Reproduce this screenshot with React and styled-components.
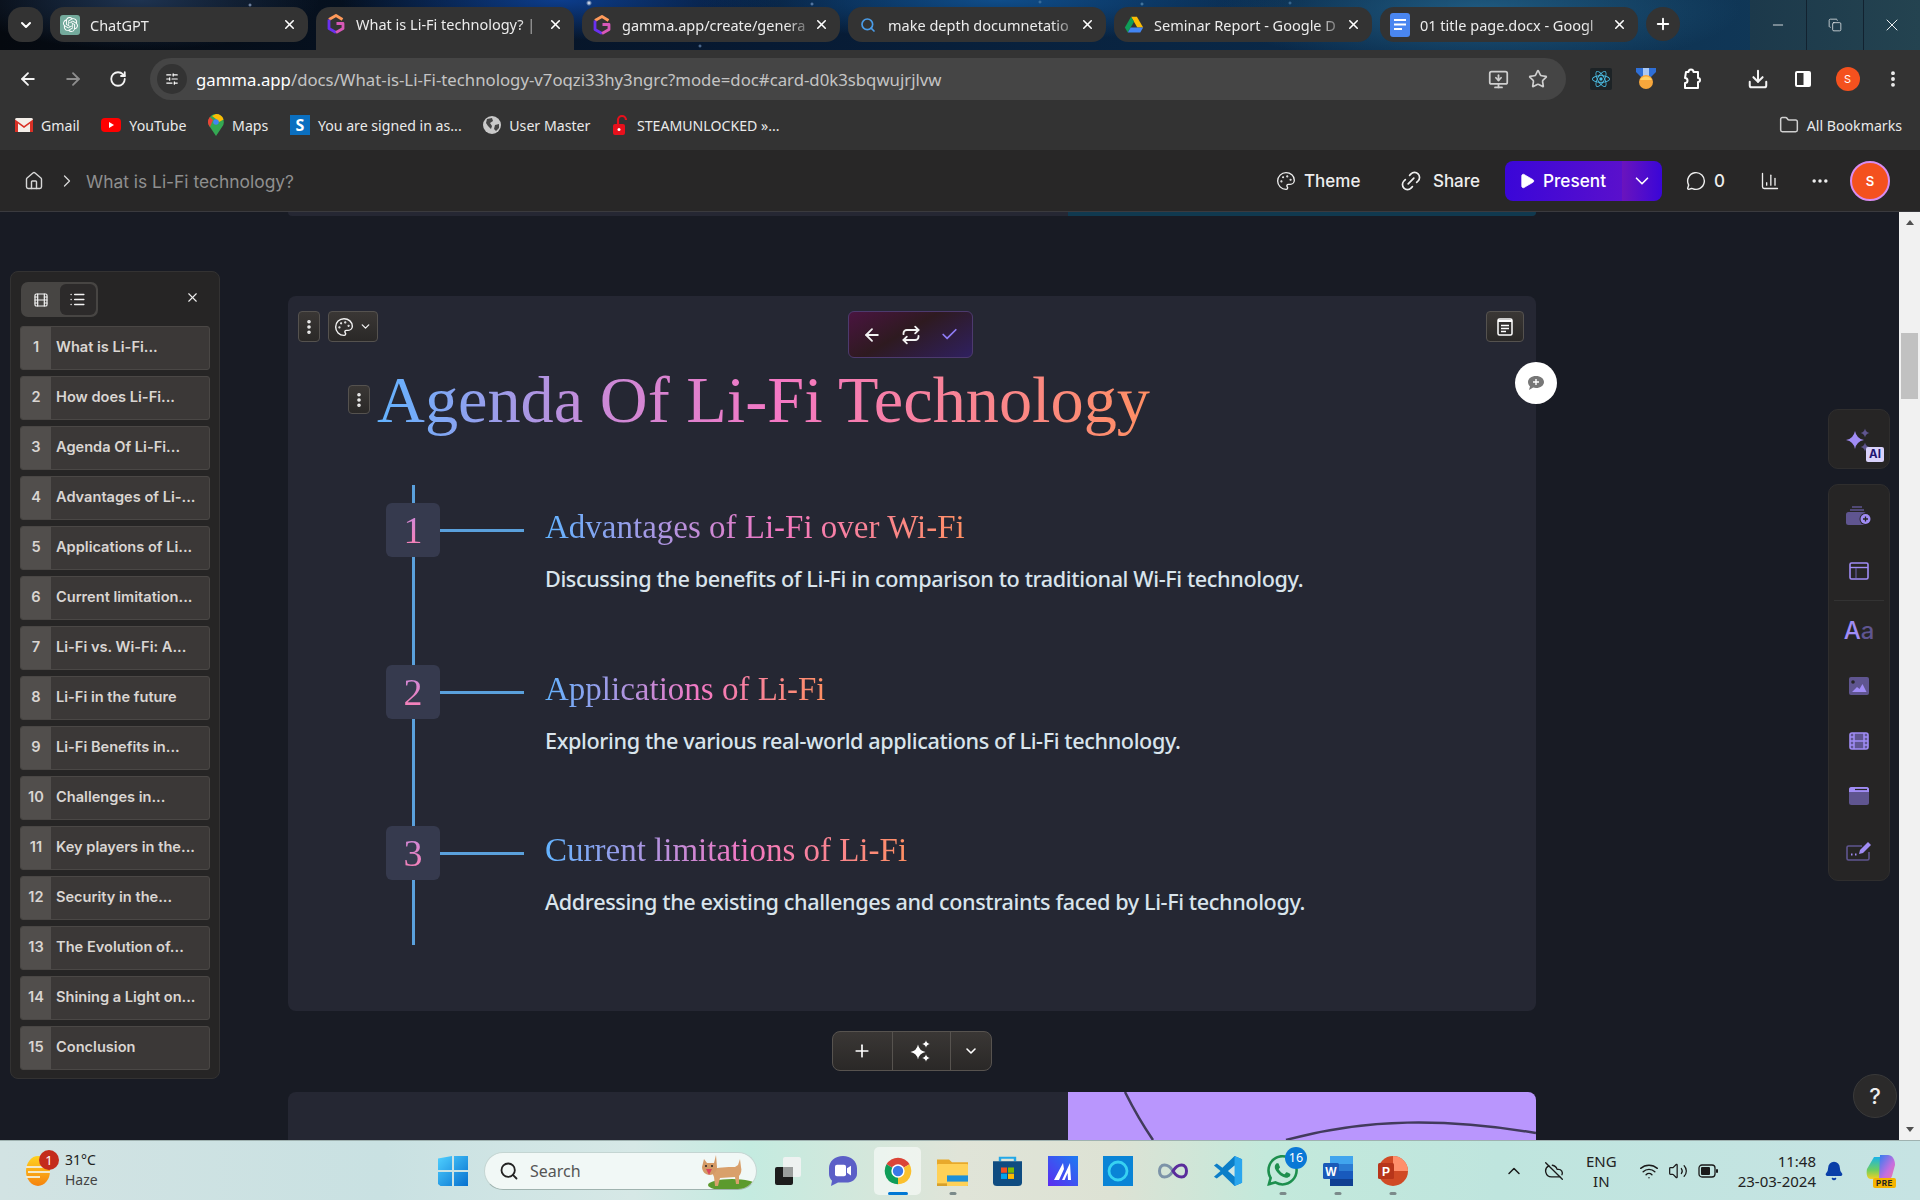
import React from 'react';
import styled, { createGlobalStyle } from 'styled-components';
import {
  ChevronDown, X, Plus, Minus, Copy, ArrowLeft, ArrowRight, RotateCw, Star, MonitorDown, Download,
  EllipsisVertical, Ellipsis, Home, ChevronRight, Palette, Link2, Play, MessageCircle, ChartColumn,
  Film, List, Repeat, Check, Search, ChevronUp, Wifi, Volume2, Bell, CloudOff, Folder, SlidersHorizontal
} from 'lucide-react';
import { SiOpenai, SiReact, SiWhatsapp } from 'react-icons/si';

const Global = createGlobalStyle`
  html, body { margin: 0; padding: 0; height: 100%; overflow: hidden; background: #181b24; }
  * { box-sizing: border-box; }
  #root { height: 1200px; width: 1920px; }
`;

const Page = styled.div`
  width: 1920px; height: 1200px; display: flex; flex-direction: column;
  font-family: "Noto Sans", sans-serif; overflow: hidden;
`;

/* ---- tab strip ---- */
const TabStrip = styled.div`
  height: 50px; flex: none; display: flex; align-items: flex-start; padding-left: 8px;
  background:
    radial-gradient(circle at 250px 5px, #9fb4d8 0, transparent 2px),
    radial-gradient(circle at 589px 3px, #ffffff 0, transparent 3px),
    radial-gradient(circle at 1040px 2px, #4d7fa8 0, transparent 2px),
    radial-gradient(circle at 1142px 4px, #5f93b8 0, transparent 2px),
    radial-gradient(circle at 1290px 3px, #4d7fa8 0, transparent 2px),
    radial-gradient(circle at 812px 4px, #7a9cc8 0, transparent 2px),
    radial-gradient(circle at 700px 46px, #6f8fb8 0, transparent 2px),
    radial-gradient(ellipse 260px 60px at 1480px 10px, #1f5a80 0, transparent 100%),
    radial-gradient(ellipse 300px 40px at 1000px 0, #0f4d8a 0, transparent 100%),
    radial-gradient(ellipse 220px 40px at 560px 0, #0c3d8c 0, transparent 100%),
    radial-gradient(ellipse 180px 50px at 140px 0, #1e3350 0, transparent 100%),
    linear-gradient(90deg, #05090f, #071a33 40%, #0a2a4a 70%, #123c5c);
`;
const TabMenu = styled.div`
  width: 35px; height: 35px; margin-top: 7px; margin-right: 7px; border-radius: 14px; background: #333;
  display: flex; align-items: center; justify-content: center; color: #fff; flex: none;
`;
const Tab = styled.div`
  width: 258px; margin-right: 8px; flex: none; height: ${p => (p.$active ? 43 : 35)}px; margin-top: 7px;
  background: #333333; border-radius: ${p => (p.$active ? '14px 14px 0 0' : '14px')};
  display: flex; align-items: ${p => (p.$active ? 'flex-start' : 'center')};
  padding: ${p => (p.$active ? '7px' : '0')} 10px 0 10px; color: #f0f0f0;
`;
const TabIcon = styled.span`
  width: 20px; height: 20px; flex: none; display: flex; align-items: center; justify-content: center; margin-right: 10px;
`;
const TabTitle = styled.span`
  flex: 1; min-width: 0; white-space: nowrap; font-size: 14.5px; line-height: 20px; color: #ececec;
  -webkit-mask-image: linear-gradient(90deg, #000 88%, rgba(0,0,0,.25) 100%);
  mask-image: linear-gradient(90deg, #000 88%, rgba(0,0,0,.25) 100%);
`;
const TabClose = styled.span`
  width: 18px; height: 20px; flex: none; display: flex; align-items: center; justify-content: center; color: #fff; margin-left: 4px;
`;
const NewTab = styled.div`
  width: 34px; height: 34px; margin-top: 7px; border-radius: 50%; background: #333; color: #fff; flex: none;
  display: flex; align-items: center; justify-content: center;
`;
const WindowControls = styled.div`
  margin-left: auto; width: 170px; height: 50px; display: flex; flex: none; background: linear-gradient(90deg, #1c394b, #244350);
`;
const WindowBtn = styled.div`
  flex: 1; display: flex; align-items: center; justify-content: center; color: #fff; height: 50px;
  border-right: ${p => (p.$last ? '0' : '1px solid #122230')};
`;

/* ---- toolbar ---- */
const Toolbar = styled.div`
  height: 50px; flex: none; background: #333333; display: flex; padding: 8px 5px 0 5px; align-items: flex-start;
`;
const NavBtn = styled.div`
  width: 45px; height: 42px; flex: none; display: flex; align-items: center; justify-content: center;
  color: ${p => (p.$dim ? '#8d8d8d' : '#f4f4f4')}; margin-left: ${p => p.$ml || 0}px;
`;
const AddressBar = styled.div`
  width: 1416px; height: 42px; margin-left: 10px; flex: none; border-radius: 21px; background: #454545;
  display: flex; align-items: center; padding: 0 8px 0 7px;
`;
const SiteInfo = styled.div`
  width: 30px; height: 30px; border-radius: 50%; background: #333; color: #fff; flex: none;
  display: flex; align-items: center; justify-content: center; margin-right: 9px;
`;
const Url = styled.div`
  flex: 1; font-size: 16.75px; color: #c4c4c4; white-space: nowrap; letter-spacing: 0;
  b { font-weight: 400; color: #fff; }
`;
const BarIcon = styled.span`
  width: 40px; display: flex; justify-content: center; color: #cfcfcf; flex: none;
`;
const ProfileDot = styled.span`
  width: 24px; height: 24px; border-radius: 50%; background: #f4511e; color: #fff; font-size: 11px;
  display: flex; align-items: center; justify-content: center; font-family: Inter, sans-serif;
`;
const ReactTile = styled.span`
  width: 22px; height: 22px; background: #1d2326; border-radius: 2px; color: #4cc0e8; display: flex; align-items: center; justify-content: center;
`;

/* ---- bookmarks ---- */
const Bookmarks = styled.div`
  height: 50px; flex: none; background: #333333; display: flex; align-items: center; padding: 0 18px 0 15px; gap: 21.6px;
`;
const Bookmark = styled.div`
  display: flex; align-items: center; gap: 8px; font-size: 14.15px; color: #eaeaea; white-space: nowrap;
  margin-left: ${p => (p.$end ? 'auto' : 0)};
`;

/* ---- gamma header ---- */
const AppHeader = styled.div`
  height: 62px; flex: none; background: #282727; border-bottom: 1px solid #3a3a3e; display: flex; align-items: center;
  padding: 0 30px 0 24px; font-family: Inter, sans-serif; color: #f0f0f0;
`;
const Crumb = styled.div`
  display: flex; align-items: center; color: #8f8f8f; font-size: 17.4px; flex: 1; padding-top: 1px;
  svg { color: #d8d8d8; flex: none; }
`;
const CrumbSep = styled.span`
  display: flex; margin: 0 9px 0 13px; 
`;
const HeaderAction = styled.div`
  display: flex; align-items: center; gap: ${p => p.$gap || 8}px; font-size: 17px; font-weight: 500; margin-left: ${p => p.$ml || 0}px; color: #eee; padding-top: 1px;
`;
const PresentBtn = styled.div`
  display: flex; height: 40px; width: 157px; border-radius: 8px; overflow: hidden; color: #fff; margin-left: 25px; font-size: 17.2px; font-weight: 500;
`;
const PresentMain = styled.div`
  flex: 1; display: flex; align-items: center; gap: 7px; padding-left: 13px;
  background: linear-gradient(90deg, #3a06d8, #5a10cc);
`;
const PresentMore = styled.div`
  width: 40px; display: flex; align-items: center; justify-content: center;
  background: linear-gradient(90deg, #6a14bd, #3a06d8);
`;
const UserAvatar = styled.div`
  width: 40px; height: 40px; border-radius: 50%; background: #f4511e; border: 2px solid #d88cf0; color: #fff; margin-left: 20px;
  display: flex; align-items: center; justify-content: center; font-size: 13px; font-weight: 600;
`;

/* ---- main area ---- */
const Main = styled.div`
  position: relative; height: 928px; flex: none; display: flex; background: #181b24; overflow: hidden;
`;
const Doc = styled.div`
  flex: 1; display: flex; flex-direction: column; padding-left: 288px; overflow: hidden;
`;
const PrevCard = styled.div`
  width: 1248px; height: 4px; flex: none; background: #252733; border-radius: 0 0 8px 8px; display: flex; justify-content: flex-end; margin-bottom: 80px;
  span { width: 468px; background: #10394f; border-radius: 0 0 8px 0; }
`;
const Card = styled.div`
  position: relative; width: 1248px; height: 715px; flex: none; background: #252733; border-radius: 8px; padding: 64px 0 0 89px;
`;
const CtlBtn = styled.div`
  position: absolute; left: ${p => p.$x}px; top: ${p => p.$y}px; width: ${p => p.$w}px; height: ${p => p.$h || 31}px;
  background: linear-gradient(#3a3735, #2a2827); border: 1px solid #55524f; border-radius: 4px; color: #f2f2f2;
  display: flex; align-items: center; justify-content: center; gap: ${p => p.$gap || 0}px;
`;
const Floating = styled.div`
  position: absolute; left: 560px; top: 15px; width: 125px; height: 47px; border-radius: 6px; border: 1px solid #4d3a6e; color: #f2f2f2;
  background: linear-gradient(150deg, #4a1440 0%, #2e1a20 45%, #2f2060 100%);
  display: flex; align-items: center; justify-content: space-between; padding: 0 13px;
`;
const CommentFab = styled.div`
  position: absolute; right: -21px; top: 66px; width: 42px; height: 42px; border-radius: 50%; background: #fff; color: #777;
  display: flex; align-items: center; justify-content: center;
`;
const Title = styled.h1`
  margin: 0; font-family: "Liberation Serif", serif; font-weight: 400; font-size: 66.3px; line-height: 80px; display: inline-block;
  background: linear-gradient(90deg, #62b3ff 0%, #c98ad8 28%, #f478c4 52%, #ff8f63 100%);
  -webkit-background-clip: text; background-clip: text; color: transparent; white-space: nowrap;
`;
const Timeline = styled.div`
  position: relative; margin: 45px 0 0 9px; height: 460px; padding-top: 18px;
  &::before { content: ''; position: absolute; left: 26px; top: 0; bottom: 0; width: 3px; background: #5aa0dc; }
`;
const Item = styled.div`
  position: relative; height: 161.5px; display: flex; align-items: flex-start;
`;
const NumBox = styled.div`
  width: 54px; height: 54px; border-radius: 6px; background: #363a4e; flex: none; display: flex; align-items: center; justify-content: center;
  font-family: "Liberation Serif", serif; font-size: 38px; position: relative;
  span {
    background: linear-gradient(180deg, #c78ae0, #ff7fb0); -webkit-background-clip: text; background-clip: text; color: transparent;
  }
`;
const Connector = styled.div`
  width: 84px; height: 3px; margin-top: 26px; background: #5aa0dc; flex: none;
`;
const ItemText = styled.div`
  margin-left: 21px; margin-top: 0;
`;
const ItemHead = styled.div`
  font-family: "Liberation Serif", serif; font-size: 33px; line-height: 48px; display: inline-block; white-space: nowrap;
  background: linear-gradient(90deg, #62b3ff 0%, #f478c4 55%, #ff8f63 100%);
  -webkit-background-clip: text; background-clip: text; color: transparent;
`;
const ItemDesc = styled.div`
  font-size: 21.65px; line-height: 34px; color: #d9e4ec; margin-top: 11px; white-space: nowrap; font-weight: 500; letter-spacing: -0.4px;
`;
const AddBar = styled.div`
  align-self: flex-start; margin: 20px 0 21px 544px; width: 160px; height: 40px; flex: none; display: flex; border-radius: 8px;
  border: 1px solid #57534f; background: linear-gradient(#3a3735, #2a2827); color: #fff; overflow: hidden;
`;
const AddCell = styled.div`
  width: ${p => p.$w}px; display: flex; align-items: center; justify-content: center;
  border-right: ${p => (p.$last ? '0' : '1px solid #57534f')};
`;
const NextCard = styled.div`
  width: 1248px; flex: 1; background: #252733; border-radius: 8px 8px 0 0; display: flex; justify-content: flex-end;
`;
const NextImage = styled.div`
  width: 468px; height: 100%; background: #b996fd; border-radius: 0 8px 0 0; overflow: hidden;
  svg { display: block; }
`;
const Scrollbar = styled.div`
  width: 21px; flex: none; background: #f1f1f1; display: flex; flex-direction: column; align-items: center; padding-top: 8px;
`;
const ScrollArrow = styled.div`
  width: 0; height: 0; border-left: 4px solid transparent; border-right: 4px solid transparent;
  ${p => (p.$down ? 'border-top: 5px solid #505050; margin-top: auto; margin-bottom: 8px;' : 'border-bottom: 5px solid #505050;')}
`;
const ScrollThumb = styled.div`
  width: 17px; height: 66px; background: #c1c1c1; margin-top: 108px;
`;
const Outline = styled.div`
  position: absolute; left: 10px; top: 59px; width: 210px; height: 808px; background: #262525; border: 1px solid #333232; border-radius: 8px;
  padding: 10px 9px; font-family: Inter, sans-serif;
`;
const OutlineTop = styled.div`
  display: flex; align-items: center; justify-content: space-between; height: 35px; margin-bottom: 9px; padding: 0 10px 0 1px; color: #eee;
`;
const OutlineClose = styled.span`
  display: flex; margin-bottom: 5px;
`;
const Toggle = styled.div`
  display: flex; width: 77px; height: 35px; background: #474543; border-radius: 7px; padding: 2px;
`;
const ToggleBtn = styled.div`
  flex: 1; display: flex; align-items: center; justify-content: center; border-radius: 6px;
  background: ${p => (p.$on ? '#2c2a2a' : 'transparent')}; color: #f2f2f2;
`;
const OutlineList = styled.div`
  display: flex; flex-direction: column; gap: 6px;
`;
const OutlineItem = styled.div`
  height: 44px; display: flex; background: #3b3837; border: 1px solid #4a4745; border-radius: 3px; overflow: hidden; color: #d9d5d2;
  font-size: 14.6px; font-weight: 600;
`;
const OutlineNum = styled.div`
  width: 30px; flex: none; background: #514e4c; display: flex; align-items: center; justify-content: center; padding-bottom: 2px;
`;
const OutlineName = styled.div`
  padding: 0 0 2px 5px; display: flex; align-items: center; white-space: nowrap;
`;
const RailPanel = styled.div`
  position: absolute; right: 30px; top: ${p => p.$top}px; width: 62px; height: ${p => p.$h}px; background: #262525; border: 1px solid #2f2e2e; border-radius: 10px;
  display: flex; flex-direction: column; align-items: center; padding-top: ${p => p.$pad || 0}px;
`;
const RailSlot = styled.div`
  height: 55px; width: 100%; display: flex; align-items: center; justify-content: center; position: relative; flex: none;
`;
const RailRule = styled.div`
  width: 50px; height: 1px; background: #333; margin: 2px 0; flex: none;
`;
const AiBadge = styled.span`
  position: absolute; right: 5px; bottom: 5px; width: 18px; height: 15px; line-height: 15px; text-align: center; background: #d9d2fb; color: #1f1470; font-size: 11.5px; font-weight: 700; border-radius: 2px;
  font-family: Inter, sans-serif;
`;
const FontGlyph = styled.div`
  font-family: Inter, sans-serif; font-size: 24px; color: #a08cf5; font-weight: 500;
  span { color: #5f5590; }
`;
const HelpBtn = styled.div`
  position: absolute; left: 1853px; top: 862px; width: 44px; height: 44px; border-radius: 50%; background: #2b2a2a; border: 1px solid #3a3a3a; color: #eee;
  display: flex; align-items: center; justify-content: center; font: 500 22px Inter, sans-serif;
`;

/* ---- taskbar ---- */
const Taskbar = styled.div`
  height: 60px; flex: none; border-top: 1px solid #9fb2b0; display: flex; align-items: center; position: relative; padding-left: 25px;
  font-family: "Noto Sans", sans-serif; color: #222;
  background: linear-gradient(90deg, #d2e3e3 0%, #c9e1e2 20%, #d6e8e6 33%, #c4ebe0 39%, #e0e4d8 50%, #dde2d4 58%, #c3e9db 66%, #bfe5de 78%, #c6e3e3 100%);
`;
const Weather = styled.div`
  display: flex; align-items: center; gap: 14px; position: relative; width: 413px; flex: none;
`;
const WeatherBadge = styled.span`
  position: absolute; left: 14px; top: -2px; width: 20px; height: 20px; border-radius: 50%; background: #c42b1c; color: #fff;
  font-size: 13px; text-align: center; line-height: 20px;
`;
const WeatherText = styled.div`
  font-size: 14px; line-height: 20px; color: #222; margin-top: -2px; span { color: #444; display: block; }
`;
const StartIcon = styled.div`
  flex: none; width: 30px; height: 30px; display: flex; align-items: center; justify-content: center; margin-right: 16px;
`;
const SearchPill = styled.div`
  width: 273px; height: 38px; border-radius: 19px; background: #f1f8f6; border: 1px solid #c4d5d2; border-bottom-color: #9fb3af; flex: none;
  display: flex; align-items: center; padding-left: 14px; gap: 11px; font-size: 16px; color: #555; position: relative; overflow: hidden;
  svg.dog { position: absolute; right: 2px; top: 1px; }
`;
const TaskApps = styled.div`
  display: flex; margin-left: 3px; flex: none;
`;
const TaskApp = styled.div`
  width: 55px; height: 48px; display: flex; align-items: center; justify-content: center; position: relative; border-radius: 5px; flex: none;
  ${p => p.$active && `background: rgba(255,255,255,.55); width: 47px; margin: 0 4px;`}
`;
const RunDot = styled.span`
  position: absolute; bottom: 0; left: 50%; transform: translateX(-50%); height: 3px; border-radius: 2px;
  width: ${p => (p.$active ? 20 : 7)}px; background: ${p => (p.$active ? '#0078d4' : '#7b8a8a')};
`;
const NotifyCount = styled.span`
  position: absolute; left: 30px; top: 0; width: 22px; height: 22px; background: #0a78d6; color: #fff; border-radius: 50%;
  font-size: 12.5px; line-height: 22px; text-align: center;
`;
const Tray = styled.div`
  margin-left: auto; display: flex; align-items: center; height: 100%; padding-right: 24px;
`;
const TrayIcon = styled.span`
  display: flex; margin-left: ${p => p.$ml || 0}px; color: #1a1a1a;
`;
const Lang = styled.div`
  font-size: 15px; line-height: 20px; text-align: center; margin-left: 22px; color: #222;
`;
const Clock = styled.div`
  font-size: 15px; line-height: 20px; text-align: right; margin-left: 20px; color: #222; white-space: nowrap;
`;
const Copilot = styled.span`
  position: relative; width: 30px; height: 34px; margin-left: 22px; display: block;
  b { position: absolute; left: 7px; bottom: 0; background: #f5b400; color: #222; font: 700 8px Inter, sans-serif; padding: 0 3px; border-radius: 2px; line-height: 10px; letter-spacing: .5px; }
`;

/* ---- drawn icons ---- */
const GammaLogo = () => (
  <svg width="20" height="22" viewBox="0 0 20 22" fill="none" strokeWidth="2.800" strokeLinejoin="round">
    <path d="M3 6.500 10 2.500l6.500 4" stroke="#ff9a5a" />
    <path d="M3 6.500v9l7 4" stroke="#6a30f0" />
    <path d="M10 19.500l7-4v-5h-6.500" stroke="#d858b8" />
  </svg>
);
const GptBox = styled.span`
  width: 20px; height: 20px; background: #74aa9c; border-radius: 3px; color: #fff; display: flex; align-items: center; justify-content: center;
`;
const ChromeLogo = ({ s = 32 }) => (
  <svg width={s} height={s} viewBox="0 0 24 24">
    <path d="M12 12 3.340 7A10 10 0 0 1 20.660 7Z" fill="#db4437" />
    <path d="M12 12 3.340 7A10 10 0 0 0 12 22Z" fill="#0f9d58" />
    <path d="M12 12 20.660 7A10 10 0 0 1 12 22Z" fill="#fbc02d" />
    <circle cx="12" cy="12" r="5" fill="#fff" /><circle cx="12" cy="12" r="3.900" fill="#3b78e7" />
  </svg>
);
const DriveLogo = () => (
  <svg width="20" height="20" viewBox="0 0 24 24">
    <path d="M8.500 2h7l7.500 13h-7z" fill="#fbbc04" /><path d="M8.500 2 1 15l3.500 6L12 8z" fill="#0f9d58" /><path d="M4.500 21l3.500-6h15l-3.500 6z" fill="#4285f4" />
  </svg>
);
const DocsLogo = () => (
  <svg width="20" height="24" viewBox="0 0 20 24">
    <rect width="20" height="24" rx="3" fill="#4a86f0" /><path d="M4 7h12M4 11.500h12M4 16h8" stroke="#fff" strokeWidth="2" />
  </svg>
);
const GmailLogo = () => (
  <svg width="18" height="14" viewBox="0 0 18 14">
    <rect width="18" height="14" rx="1.500" fill="#f4efe9" /><path d="M0 1.500 9 8l9-6.500V14h-3V5.500L9 10 3 5.500V14H0z" fill="#d93025" />
  </svg>
);
const YoutubeLogo = () => (
  <svg width="20" height="14" viewBox="0 0 20 14">
    <rect width="20" height="14" rx="4" fill="#f00" /><path d="M8 4v6l5-3z" fill="#fff" />
  </svg>
);
const MapsLogo = () => (
  <svg width="16" height="22" viewBox="0 0 16 22">
    <path d="M8 0a8 8 0 0 1 6 13L8 22 2 13A8 8 0 0 1 8 0z" fill="#34a853" />
    <path d="M8 0a8 8 0 0 1 7.600 5.500L11 8 8 5 4 2z" fill="#fbbc04" />
    <path d="M2 13A8 8 0 0 1 1.800 3L5 6z" fill="#ea4335" />
    <circle cx="8" cy="8" r="2.800" fill="#4285f4" />
  </svg>
);
const SBox = styled.span`
  width: 20px; height: 20px; background: #0a6fc0; color: #fff; display: flex; align-items: center; justify-content: center; font-size: 16px; font-weight: 700;
`;
const GlobeIcon = () => (
  <svg width="18" height="18" viewBox="0 0 18 18">
    <circle cx="9" cy="9" r="9" fill="#c9c9c9" /><path d="M4 3l5-1 1 3-3 2 2 3-1 3-3-3-2-3zM12 9l4-1 0 4-3 3-2-2z" fill="#444" />
  </svg>
);
const OpenLockIcon = () => (
  <svg width="17" height="22" viewBox="0 0 17 22">
    <path d="M6 10V6a4 4 0 0 1 8 0" fill="none" stroke="#e8101c" strokeWidth="2.200" /><rect x="1" y="10" width="12" height="11" rx="2" fill="#e8101c" /><circle cx="7" cy="15.500" r="1.500" fill="#fff" />
  </svg>
);
const MedalIcon = () => (
  <svg width="22" height="22" viewBox="0 0 22 22">
    <path d="M1 0h20v4l-6 6H7L1 4z" fill="#2f6fd6" /><path d="M8 0h6v9H8z" fill="#a9c8f5" />
    <circle cx="11" cy="14" r="7" fill="#f7a73c" /><path d="M5 12a7 7 0 0 1 12 0z" fill="#ffd166" />
  </svg>
);
const PuzzleIcon = () => (
  <svg width="22" height="22" viewBox="0 0 22 22" fill="none" stroke="#fff" strokeWidth="2" strokeLinejoin="round">
    <path d="M6 4h2.500a2.500 2.500 0 0 1 5 0H18v6a2 2 0 0 1 0 4v6H5v-5a2.400 2.400 0 0 0 0-5z" />
  </svg>
);
const SidePanelIcon = () => (
  <svg width="18" height="18" viewBox="0 0 18 18"><rect x="1" y="1" width="16" height="16" rx="2" fill="#fff" /><rect x="3" y="3" width="6.500" height="12" fill="#333" /></svg>
);
const sparkle = (x, y, r) => {
  const k = r * 0.16;
  return `M${x} ${y - r}Q${x + k} ${y - k} ${x + r} ${y}Q${x + k} ${y + k} ${x} ${y + r}Q${x - k} ${y + k} ${x - r} ${y}Q${x - k} ${y - k} ${x} ${y - r}Z`;
};
const AiSparkles = () => (
  <svg width="30" height="30" viewBox="0 0 30 30">
    <path d={sparkle(11, 15, 9)} fill="#a08cf5" /><path d={sparkle(21, 8, 4.5)} fill="#5f5590" /><path d={sparkle(21, 22, 4.5)} fill="#5f5590" />
  </svg>
);
const MiniSparkles = () => (
  <svg width="22" height="22" viewBox="0 0 22 22" fill="#fff">
    <path d={sparkle(8, 12, 7.5)} /><path d={sparkle(16, 4, 3.8)} /><path d={sparkle(16, 18, 3.8)} />
  </svg>
);
const RailAddCard = () => (
  <svg width="26" height="20" viewBox="0 0 26 20">
    <path d="M6 1h10M4 4h14" stroke="#5f5590" strokeWidth="1.600" /><rect y="6" width="20" height="13" rx="2.500" fill="#5f5590" />
    <circle cx="19.500" cy="13" r="6" fill="#262525" /><circle cx="19.500" cy="13" r="5" fill="#a08cf5" /><path d="M17 13h5M19.500 10.500v5" stroke="#262525" strokeWidth="1.300" />
  </svg>
);
const RailLayout = () => (
  <svg width="20" height="18" viewBox="0 0 20 18" fill="none">
    <rect x="1" y="1" width="18" height="16" rx="1.500" stroke="#a08cf5" strokeWidth="1.600" /><path d="M1 5.500h18" stroke="#a08cf5" strokeWidth="1.400" /><path d="M7 6v10" stroke="#5f5590" strokeWidth="1.300" />
  </svg>
);
const RailImage = () => (
  <svg width="20" height="18" viewBox="0 0 20 18"><rect width="20" height="18" rx="2" fill="#5f5590" /><circle cx="4" cy="5" r="1.800" fill="#262525" /><path d="M3 15l5-5 2.500 2 3-5 4 8z" fill="#a08cf5" /></svg>
);
const RailFilm = () => (
  <svg width="20" height="18" viewBox="0 0 20 18" fill="none"><rect x="1" y="1" width="18" height="16" rx="2" fill="#5f5590" stroke="#a08cf5" strokeWidth="1.600" /><path d="M5 1v16M15 1v16M1 5h4M1 9h18M1 13h4M15 5h4M15 13h4" stroke="#a08cf5" strokeWidth="1.500" /></svg>
);
const RailEmbed = () => (
  <svg width="20" height="18" viewBox="0 0 20 18"><rect width="20" height="18" rx="2.500" fill="#5f5590" /><path d="M0 2.500A2.500 2.500 0 0 1 2.500 0h15A2.500 2.500 0 0 1 20 2.500V5H0z" fill="#a08cf5" /><path d="M6 2.500h12" stroke="#262525" strokeWidth="1.200" /></svg>
);
const RailEdit = () => (
  <svg width="26" height="20" viewBox="0 0 26 20" fill="none">
    <path d="M16 5H2.500A1.500 1.500 0 0 0 1 6.500v11A1.500 1.500 0 0 0 2.500 19h19a1.500 1.500 0 0 0 1.500-1.500V11" stroke="#5f5590" strokeWidth="1.600" />
    <path d="M5 13.500h1.500M9 13.500h1.500" stroke="#a08cf5" strokeWidth="1.800" /><path d="M13 13l1-4 8-8 3 3-8 8z" fill="#a08cf5" />
  </svg>
);
const NoteIcon = () => (
  <svg width="16" height="18" viewBox="0 0 16 18" fill="none"><rect x="1" y="1" width="14" height="16" rx="1.500" stroke="#fff" strokeWidth="1.500" /><path d="M1 3h14" stroke="#fff" strokeWidth="2" /><path d="M4 7.500h8M4 10.500h8M4 13.500h5" stroke="#fff" strokeWidth="1.400" /></svg>
);
const CommentPlus = () => (
  <svg width="18" height="16" viewBox="0 0 18 16"><path d="M9 1c4.500 0 8 2.600 8 6s-3.500 6-8 6c-1 0-2-.1-2.800-.4L2 15l1-3.600C1.800 10.300 1 8.800 1 7c0-3.400 3.500-6 8-6z" fill="#777" /><path d="M9 4v6M6 7h6" stroke="#fff" strokeWidth="1.400" /></svg>
);
const WeatherIcon = () => (
  <svg width="26" height="30" viewBox="0 0 26 30">
    <defs><linearGradient id="wx" x1="0" y1="0" x2="0" y2="1"><stop offset="0" stopColor="#ffd21f" /><stop offset="1" stopColor="#f5820d" /></linearGradient></defs>
    <ellipse cx="13" cy="15" rx="12" ry="15" fill="url(#wx)" /><path d="M1 11h18M3 16h22M1 21h14" stroke="#f3e9c9" strokeWidth="2.200" />
  </svg>
);
const WindowsLogo = () => (
  <svg width="30" height="30" viewBox="0 0 30 30">
    <defs><linearGradient id="win" x1="0" y1="0" x2="1" y2="1"><stop offset="0" stopColor="#4fd0ff" /><stop offset="1" stopColor="#0670cf" /></linearGradient></defs>
    <path d="M0 2.500 14 0v14H0zM16 0l14 0v14H16zM0 16h14v14H2.500L0 28zM16 16h14v14H16z" fill="url(#win)" />
  </svg>
);
const DogArt = () => (
  <svg className="dog" width="60" height="36" viewBox="0 0 60 36">
    <ellipse cx="38" cy="31" rx="24" ry="6" fill="#5c9a2d" />
    <path d="M17 16c6-3 16-3 24-3l3-2 2-6 1 8c1 3 0 7-2 9v8h-3l-1-7-15 1-2 8h-3l-1-9z" fill="#d9a06b" />
    <path d="M10 5l3 4h7l2-8 1 12c0 4-3 8-7 8s-8-3-8-8z" fill="#d49a66" /><path d="M12 15l3 6 3-6z" fill="#d9455c" /><circle cx="12" cy="12" r="1" fill="#222" /><circle cx="18" cy="12" r="1" fill="#222" />
  </svg>
);
const TaskView = () => (
  <svg width="26" height="28" viewBox="0 0 26 28"><rect x="8" y="0" width="18" height="20" rx="2" fill="#eef2f1" /><rect x="0" y="10" width="18" height="18" rx="2" fill="#1c1c1c" /><rect x="8" y="10" width="10" height="10" fill="#9a9d9c" /></svg>
);
const MeetIcon = () => (
  <svg width="28" height="30" viewBox="0 0 28 34" preserveAspectRatio="none"><path d="M14 0c8 0 14 6 14 14v6c0 6-5 10-11 10H9l-7 4 1-6C1 26 0 23 0 20v-6C0 6 6 0 14 0z" fill="#5b5fc7" /><rect x="6" y="10" width="11" height="13" rx="2" fill="#fff" /><path d="M18 14l4-3v11l-4-3z" fill="#fff" /></svg>
);
const FolderIcon = () => (
  <svg width="31" height="30" viewBox="0 0 31 34" preserveAspectRatio="none"><path d="M0 4h12l3 3h16v27H0z" fill="#e8a92b" /><rect y="9" width="31" height="25" rx="1" fill="#ffd157" /><rect x="10" y="22" width="21" height="7" fill="#1c8fd8" /><rect y="31" width="10" height="3" fill="#d7a02a" /></svg>
);
const StoreIcon = () => (
  <svg width="29" height="30" viewBox="0 0 29 34" preserveAspectRatio="none"><path d="M7 6V2h15v4" fill="none" stroke="#23a8e8" strokeWidth="2.400" /><path d="M0 6h29v24a4 4 0 0 1-4 4H4a4 4 0 0 1-4-4z" fill="#0f4c81" /><rect x="8" y="13" width="6" height="6" fill="#f25022" /><rect x="15" y="13" width="6" height="6" fill="#7fba00" /><rect x="8" y="20" width="6" height="6" fill="#00a4ef" /><rect x="15" y="20" width="6" height="6" fill="#ffb900" /></svg>
);
const StudioIcon = () => (
  <svg width="30" height="30" viewBox="0 0 30 30"><defs><linearGradient id="mx" x1="0" y1="1" x2="1" y2="0"><stop offset="0" stopColor="#5b2cf0" /><stop offset="1" stopColor="#1d7cf2" /></linearGradient></defs><rect width="30" height="30" fill="url(#mx)" /><path d="M6 24 15 7l1 6-5 11zM14 24 22 7l1 17h-3l-.4-7-3 7z" fill="#fff" /></svg>
);
const AlexaIcon = () => (
  <svg width="30" height="30" viewBox="0 0 30 30"><rect width="30" height="30" fill="#0a84d6" /><circle cx="15" cy="15" r="9" fill="none" stroke="#37d2f2" strokeWidth="2.800" /></svg>
);
const InfinityIcon = () => (
  <svg width="30" height="18" viewBox="0 0 30 18" fill="none"><path d="M15 9C12 4 9 3 6.500 3 3 3 1.500 6 1.500 9s1.500 6 5 6c2.500 0 5.500-1 8.500-6z" stroke="#7c93a8" strokeWidth="3" /><path d="M15 9c3-5 6-6 8.500-6 3.500 0 5 3 5 6s-1.500 6-5 6c-2.500 0-5.500-1-8.500-6z" stroke="#5a2c9c" strokeWidth="3" /></svg>
);
const VsCodeIcon = () => (
  <svg width="30" height="30" viewBox="0 0 30 32"><path d="M22 0l8 3.500v25L22 32 9 19.500 3 24l-3-2 7-6-7-6 3-2 6 4.500z" fill="#0c7ec8" /><path d="M22 0l8 3.500v25L22 32V22l-7-6 7-6z" fill="#2aa6ee" /><path d="M22 10v12l-7-6z" fill="#d2e7e4" /></svg>
);
const WordIcon = () => (
  <svg width="30" height="30" viewBox="0 0 30 30"><rect x="7" width="23" height="30" rx="2" fill="#2b7cd3" /><rect x="7" width="23" height="8" fill="#41a5ee" /><rect x="7" y="15" width="23" height="8" fill="#185abd" /><rect x="7" y="23" width="23" height="7" fill="#103f91" /><rect y="7" width="16" height="16" rx="1.500" fill="#1a5ab8" /><text x="8" y="19.500" textAnchor="middle" fontFamily="Liberation Sans, sans-serif" fontSize="12" fontWeight="700" fill="#fff">W</text></svg>
);
const PptIcon = () => (
  <svg width="30" height="30" viewBox="0 0 30 30"><circle cx="15" cy="15" r="15" fill="#d04a25" /><path d="M15 0a15 15 0 0 1 15 15H15z" fill="#ff8f6b" /><rect y="7" width="16" height="16" rx="1.500" fill="#b7351a" /><text x="8" y="19.500" textAnchor="middle" fontFamily="Liberation Sans, sans-serif" fontSize="12" fontWeight="700" fill="#fff">P</text></svg>
);
const BatteryIcon = () => (
  <svg width="20" height="14" viewBox="0 0 20 14"><rect x="1" y="1" width="16" height="12" rx="3" fill="none" stroke="#1a1a1a" strokeWidth="1.300" /><rect x="3" y="3" width="9" height="8" rx="1" fill="#1a1a1a" /><rect x="18" y="5" width="2" height="4" rx="1" fill="#1a1a1a" /></svg>
);
const CopilotIcon = () => (
  <svg width="30" height="26" viewBox="0 0 30 26">
    <defs>
      <linearGradient id="c1" x1="0" y1="0" x2="0" y2="1"><stop offset="0" stopColor="#19b4e8" /><stop offset=".6" stopColor="#6fcf5f" /><stop offset="1" stopColor="#f5d020" /></linearGradient>
      <linearGradient id="c2" x1="0" y1="0" x2="1" y2="1"><stop offset="0" stopColor="#2d7ff0" /><stop offset=".6" stopColor="#c46ee0" /><stop offset="1" stopColor="#f078a8" /></linearGradient>
    </defs>
    <path d="M8 3h9l-4 22H5C1 25 0 20 1 15z" fill="url(#c1)" /><path d="M14 1h8c4 0 7 4 7 10l-3 11c-1 3-3 3-5 3h-8z" fill="url(#c2)" />
  </svg>
);
const NextArt = () => (
  <svg width="468" height="48" viewBox="0 0 468 48" fill="none" stroke="#423b5c" strokeWidth="2.500">
    <path d="M57 0c8 16 17 32 28 48" /><path d="M218 48c80-22 160-22 250-7" />
  </svg>
);

const outline = ['What is Li-Fi...', 'How does Li-Fi...', 'Agenda Of Li-Fi...', 'Advantages of Li-...', 'Applications of Li...', 'Current limitation...', 'Li-Fi vs. Wi-Fi: A...', 'Li-Fi in the future', 'Li-Fi Benefits in...', 'Challenges in...', 'Key players in the...', 'Security in the...', 'The Evolution of...', 'Shining a Light on...', 'Conclusion'];
const agenda = [
  ['Advantages of Li-Fi over Wi-Fi', 'Discussing the benefits of Li-Fi in comparison to traditional Wi-Fi technology.'],
  ['Applications of Li-Fi', 'Exploring the various real-world applications of Li-Fi technology.'],
  ['Current limitations of Li-Fi', 'Addressing the existing challenges and constraints faced by Li-Fi technology.'],
];
const tabs = [
  { t: 'ChatGPT', i: <GptBox><SiOpenai size={15} /></GptBox> },
  { t: 'What is Li-Fi technology? |', i: <GammaLogo />, active: true },
  { t: 'gamma.app/create/genera', i: <GammaLogo /> },
  { t: 'make depth documnetatio', i: <Search size={16} color="#4a9ce8" strokeWidth={2.5} /> },
  { t: 'Seminar Report - Google D', i: <DriveLogo /> },
  { t: '01 title page.docx - Googl', i: <DocsLogo /> },
];

export default function App() {
  return (
    <Page>
      <Global />
      <TabStrip>
        <TabMenu><ChevronDown size={16} strokeWidth={3} /></TabMenu>
        {tabs.map(tab => (
          <Tab key={tab.t} $active={tab.active}>
            <TabIcon>{tab.i}</TabIcon>
            <TabTitle>{tab.t}</TabTitle>
            <TabClose><X size={15} strokeWidth={2.5} /></TabClose>
          </Tab>
        ))}
        <NewTab><Plus size={18} strokeWidth={2.5} /></NewTab>
        <WindowControls>
          <WindowBtn><Minus size={16} strokeWidth={1.2} /></WindowBtn>
          <WindowBtn><Copy size={14} strokeWidth={1.2} /></WindowBtn>
          <WindowBtn $last><X size={20} strokeWidth={1.1} /></WindowBtn>
        </WindowControls>
      </TabStrip>

      <Toolbar>
        <NavBtn><ArrowLeft size={20} strokeWidth={2.2} /></NavBtn>
        <NavBtn $dim><ArrowRight size={20} strokeWidth={2.2} /></NavBtn>
        <NavBtn><RotateCw size={18} strokeWidth={2.4} /></NavBtn>
        <AddressBar>
          <SiteInfo><SlidersHorizontal size={14} strokeWidth={2} /></SiteInfo>
          <Url><b>gamma.app</b>/docs/What-is-Li-Fi-technology-v7oqzi33hy3ngrc?mode=doc#card-d0k3sbqwujrjlvw</Url>
          <BarIcon><MonitorDown size={21} strokeWidth={2} /></BarIcon>
          <BarIcon><Star size={20} strokeWidth={2} /></BarIcon>
        </AddressBar>
        <NavBtn $ml={12}><ReactTile><SiReact size={18} /></ReactTile></NavBtn>
        <NavBtn><MedalIcon /></NavBtn>
        <NavBtn><PuzzleIcon /></NavBtn>
        <NavBtn $ml={22}><Download size={22} strokeWidth={2.2} /></NavBtn>
        <NavBtn><SidePanelIcon /></NavBtn>
        <NavBtn><ProfileDot>S</ProfileDot></NavBtn>
        <NavBtn><EllipsisVertical size={20} strokeWidth={2.6} /></NavBtn>
      </Toolbar>

      <Bookmarks>
        <Bookmark><GmailLogo />Gmail</Bookmark>
        <Bookmark><YoutubeLogo />YouTube</Bookmark>
        <Bookmark><MapsLogo />Maps</Bookmark>
        <Bookmark><SBox>S</SBox>You are signed in as...</Bookmark>
        <Bookmark><GlobeIcon />User Master</Bookmark>
        <Bookmark><OpenLockIcon />STEAMUNLOCKED »...</Bookmark>
        <Bookmark $end><Folder size={20} color="#cfcfcf" strokeWidth={1.8} />All Bookmarks</Bookmark>
      </Bookmarks>

      <AppHeader>
        <Crumb>
          <Home size={20} strokeWidth={1.7} />
          <CrumbSep><ChevronRight size={20} strokeWidth={1.5} /></CrumbSep>
          What is Li-Fi technology?
        </Crumb>
        <HeaderAction><Palette size={20} strokeWidth={1.6} />Theme</HeaderAction>
        <HeaderAction $ml={38.500} $gap={10}><Link2 size={24} strokeWidth={1.7} style={{ transform: 'rotate(-45deg)' }} />Share</HeaderAction>
        <PresentBtn>
          <PresentMain><Play size={18} fill="#fff" strokeWidth={1} />Present</PresentMain>
          <PresentMore><ChevronDown size={22} strokeWidth={1.8} /></PresentMore>
        </PresentBtn>
        <HeaderAction $ml={24}><MessageCircle size={20} strokeWidth={1.7} />0</HeaderAction>
        <HeaderAction $ml={35}><ChartColumn size={20} strokeWidth={1.6} /></HeaderAction>
        <HeaderAction $ml={30}><Ellipsis size={20} strokeWidth={2.2} /></HeaderAction>
        <UserAvatar>S</UserAvatar>
      </AppHeader>

      <Main>
        <Doc>
          <PrevCard><span /></PrevCard>
          <Card>
            <CtlBtn $x={10} $y={15} $w={22}><EllipsisVertical size={18} strokeWidth={2.8} /></CtlBtn>
            <CtlBtn $x={40} $y={15} $w={50} $gap={5}><Palette size={20} strokeWidth={1.7} /><ChevronDown size={13} strokeWidth={2.4} /></CtlBtn>
            <CtlBtn $x={60} $y={89} $w={22} $h={29}><EllipsisVertical size={18} strokeWidth={2.8} /></CtlBtn>
            <Floating>
              <ArrowLeft size={20} strokeWidth={2.2} />
              <Repeat size={20} strokeWidth={2.2} />
              <Check size={19} strokeWidth={2.2} color="#8f7cf5" />
            </Floating>
            <CtlBtn $x={1198} $y={15} $w={38}><NoteIcon /></CtlBtn>
            <CommentFab><CommentPlus /></CommentFab>
            <Title>Agenda Of Li-Fi Technology</Title>
            <Timeline>
              {agenda.map(([h, d], i) => (
                <Item key={h}>
                  <NumBox><span>{i + 1}</span></NumBox>
                  <Connector />
                  <ItemText>
                    <ItemHead>{h}</ItemHead>
                    <ItemDesc>{d}</ItemDesc>
                  </ItemText>
                </Item>
              ))}
            </Timeline>
          </Card>
          <AddBar>
            <AddCell $w={60}><Plus size={20} strokeWidth={2} /></AddCell>
            <AddCell $w={59}><MiniSparkles /></AddCell>
            <AddCell $w={40} $last><ChevronDown size={16} strokeWidth={2.4} /></AddCell>
          </AddBar>
          <NextCard><NextImage><NextArt /></NextImage></NextCard>
        </Doc>
        <Scrollbar>
          <ScrollArrow />
          <ScrollThumb />
          <ScrollArrow $down />
        </Scrollbar>

        <Outline>
          <OutlineTop>
            <Toggle>
              <ToggleBtn><Film size={16} strokeWidth={1.8} /></ToggleBtn>
              <ToggleBtn $on><List size={17} strokeWidth={2} /></ToggleBtn>
            </Toggle>
            <OutlineClose><X size={15} strokeWidth={1.8} /></OutlineClose>
          </OutlineTop>
          <OutlineList>
            {outline.map((o, i) => (
              <OutlineItem key={o}>
                <OutlineNum>{i + 1}</OutlineNum>
                <OutlineName>{o}</OutlineName>
              </OutlineItem>
            ))}
          </OutlineList>
        </Outline>

        <RailPanel $top={197} $h={60} $pad={2}>
          <RailSlot><AiSparkles /><AiBadge>AI</AiBadge></RailSlot>
        </RailPanel>
        <RailPanel $top={272} $h={397} $pad={3}>
          <RailSlot><RailAddCard /></RailSlot>
          <RailSlot><RailLayout /></RailSlot>
          <RailRule />
          <RailSlot><FontGlyph>A<span>a</span></FontGlyph></RailSlot>
          <RailSlot><RailImage /></RailSlot>
          <RailSlot><RailFilm /></RailSlot>
          <RailSlot><RailEmbed /></RailSlot>
          <RailSlot><RailEdit /></RailSlot>
        </RailPanel>
        <HelpBtn>?</HelpBtn>
      </Main>

      <Taskbar>
        <Weather>
          <WeatherIcon />
          <WeatherBadge>1</WeatherBadge>
          <WeatherText>31°C<span>Haze</span></WeatherText>
        </Weather>
        <StartIcon><WindowsLogo /></StartIcon>
        <SearchPill>
          <Search size={20} color="#222" strokeWidth={2.2} />Search
          <DogArt />
        </SearchPill>
        <TaskApps>
          <TaskApp><TaskView /></TaskApp>
          <TaskApp><MeetIcon /></TaskApp>
          <TaskApp $active><ChromeLogo /><RunDot $active /></TaskApp>
          <TaskApp><FolderIcon /><RunDot /></TaskApp>
          <TaskApp><StoreIcon /></TaskApp>
          <TaskApp><StudioIcon /></TaskApp>
          <TaskApp><AlexaIcon /></TaskApp>
          <TaskApp><InfinityIcon /></TaskApp>
          <TaskApp><VsCodeIcon /></TaskApp>
          <TaskApp><SiWhatsapp size={31} color="#1d8f4e" /><NotifyCount>16</NotifyCount><RunDot /></TaskApp>
          <TaskApp><WordIcon /><RunDot /></TaskApp>
          <TaskApp><PptIcon /><RunDot /></TaskApp>
        </TaskApps>
        <Tray>
          <TrayIcon><ChevronUp size={20} strokeWidth={1.8} /></TrayIcon>
          <TrayIcon $ml={20}><CloudOff size={20} strokeWidth={1.6} /></TrayIcon>
          <Lang>ENG<br />IN</Lang>
          <TrayIcon $ml={22}><Wifi size={20} strokeWidth={1.7} /></TrayIcon>
          <TrayIcon $ml={9}><Volume2 size={20} strokeWidth={1.5} /></TrayIcon>
          <TrayIcon $ml={10}><BatteryIcon /></TrayIcon>
          <Clock>11:48<br />23-03-2024</Clock>
          <TrayIcon $ml={8}><Bell size={20} fill="#0a3fa8" color="#0a3fa8" /></TrayIcon>
          <Copilot><CopilotIcon /><b>PRE</b></Copilot>
        </Tray>
      </Taskbar>
    </Page>
  );
}
